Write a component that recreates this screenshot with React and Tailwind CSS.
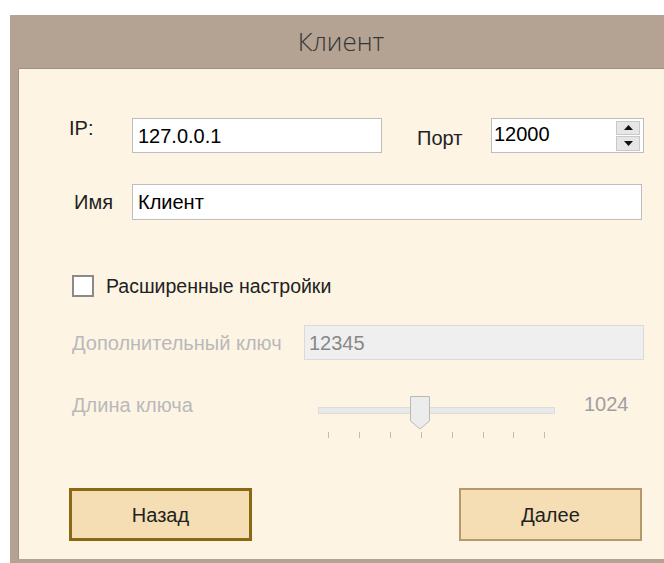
import React from "react";

const sans = { fontFamily: '"Liberation Sans", Arial, sans-serif' };

function Spinner() {
  return (
    <div className="flex flex-col gap-[1px] w-[24px] h-[30px] mr-[3px]">
      <div className="flex-1 bg-[#e6e6e6] border border-[#c8c8c8] flex items-center justify-center">
        <svg width="9" height="5" viewBox="0 0 9 5"><path d="M0 5 L4.5 0 L9 5 Z" fill="#111" /></svg>
      </div>
      <div className="flex-1 bg-[#e6e6e6] border border-[#c8c8c8] flex items-center justify-center">
        <svg width="9" height="5" viewBox="0 0 9 5"><path d="M0 0 L4.5 5 L9 0 Z" fill="#111" /></svg>
      </div>
    </div>
  );
}

function Slider() {
  const ticks = [0, 1, 2, 3, 4, 5, 6, 7];
  return (
    <div className="relative w-[240px] h-[44px]">
      <div className="absolute left-[0px] top-[11px] w-[237px] h-[7px] bg-[#e9e9e9] border border-[#dcdcdc]" />
      <svg className="absolute left-[92px] top-[0px]" width="20" height="34" viewBox="0 0 20 34">
        <path d="M0.5 0.5 H19.5 V25 L10 33 L0.5 25 Z" fill="#ececec" stroke="#b9b9b9" />
      </svg>
      {ticks.map((i) => (
        <div
          key={i}
          className="absolute top-[36px] w-[1px] h-[6px] bg-[#bdbdbd]"
          style={{ left: 10 + i * 30.9 }}
        />
      ))}
    </div>
  );
}

export default function App() {
  return (
    <div className="w-[664px] h-[563px] overflow-hidden bg-white" style={sans}>
      <div className="ml-[10px] mt-[15px] w-[700px] bg-[#b4a392] pb-[4px]">
        <div
          className="h-[53px] w-[662px] flex items-center justify-center text-[26px] text-[#363636] font-light"
          style={{ fontFamily: '"Open Sans", "Noto Sans", sans-serif' }}
        >
          Клиент
        </div>
        <div className="ml-[8px] h-[491px] bg-[#fdf4e4] border-t border-l border-[#9e9184] text-[20px] leading-[20px] text-[#222]">
          {/* address and port */}
          <div className="flex items-start pt-[49px] pl-[50px]">
            <div className="w-[63px] pt-[0px]">IP:</div>
            <div className="w-[250px] h-[35px] bg-white border border-[#bdbdbd] flex items-center pl-[5px] text-black">
              127.0.0.1
            </div>
            <div className="w-[109px] pl-[35px] pt-[10px]">Порт</div>
            <div className="w-[153px] h-[35px] bg-white border border-[#bdbdbd] flex items-center justify-between pl-[2px] text-black">
              <span className="-mt-[4px]">12000</span>
              <Spinner />
            </div>
          </div>
          {/* name */}
          <div className="flex items-center pt-[31px] pl-[55px]">
            <div className="w-[58px]">Имя</div>
            <div className="w-[510px] h-[36px] bg-white border border-[#bdbdbd] flex items-center pl-[5px] text-black">
              Клиент
            </div>
          </div>
          {/* advanced toggle */}
          <div className="flex items-center pt-[55px] pl-[53px]">
            <div className="w-[22px] h-[22px] bg-white border-2 border-[#8a8a8a]" />
            <div className="pl-[12px] text-[19.5px]">Расширенные настройки</div>
          </div>
          {/* extra key */}
          <div className="flex items-center pt-[28px] pl-[53px]">
            <div className="w-[232px] text-[#b9b9b9]">Дополнительный ключ</div>
            <div className="w-[340px] h-[35px] bg-[#efefef] border border-[#dadada] flex items-center pl-[4px] text-[#888]">
              12345
            </div>
          </div>
          {/* key length */}
          <div className="flex items-start pt-[36px] pl-[53px]">
            <div className="w-[246px] -mt-[1px] text-[#b9b9b9]">Длина ключа</div>
            <Slider />
            <div className="pl-[26px] -mt-[2px] text-[#a0a0a0]">1024</div>
          </div>
          {/* navigation */}
          <div className="flex items-center pt-[48px] pl-[50px]">
            <button className="w-[183px] h-[53px] bg-[#f5deb3] border-[3px] border-[#8b6914] text-[#222]">
              Назад
            </button>
            <button className="ml-[207px] w-[183px] h-[53px] bg-[#f5deb3] border-2 border-[#b49a6a] text-[#222]">
              Далее
            </button>
          </div>
        </div>
      </div>
    </div>
  );
}
